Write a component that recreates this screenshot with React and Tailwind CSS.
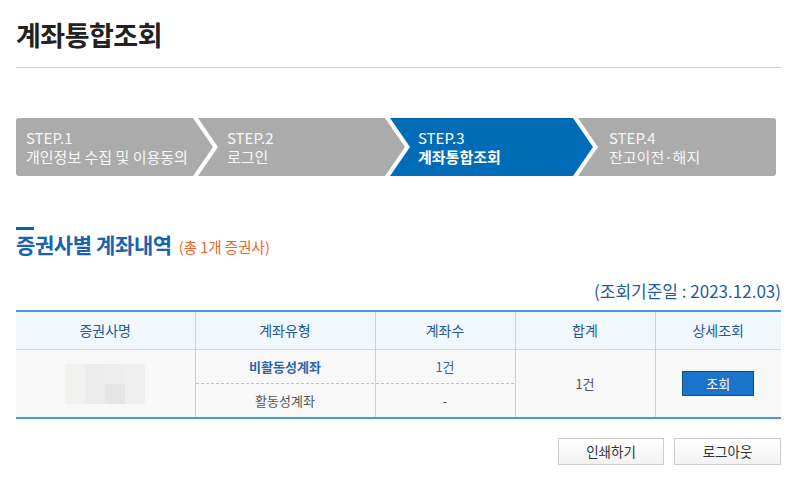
import React from 'react';

const font = { fontFamily: '"Noto Sans CJK KR", "Noto Sans", sans-serif' };

const steps = [
  { no: 'STEP.1', label: '개인정보 수집 및 이용동의', w: 'w-[197px]', pl: 'pl-[10px]', clip: '[clip-path:polygon(0_0,calc(100%_-_20px)_0,100%_50%,calc(100%_-_20px)_100%,0_100%)]' },
  { no: 'STEP.2', label: '로그인', w: 'w-[207px] ml-[-15px]', pl: 'pl-[29px]', clip: '[clip-path:polygon(0_0,calc(100%_-_20px)_0,100%_50%,calc(100%_-_20px)_100%,0_100%,20px_50%)]' },
  { no: 'STEP.3', label: '계좌통합조회', w: 'w-[203px] ml-[-15px]', pl: 'pl-[28px]', clip: '[clip-path:polygon(0_0,calc(100%_-_20px)_0,100%_50%,calc(100%_-_20px)_100%,0_100%,20px_50%)]', active: true },
  { no: 'STEP.4', label: '잔고이전·해지', w: 'w-[198px] ml-[-15px]', pl: 'pl-[31px]', clip: '[clip-path:polygon(0_0,100%_0,100%_100%,0_100%,20px_50%)]' },
];

const StepBar = () => (
  <div className="flex w-[760px] h-[58px] mt-[50px] rounded-[3px] overflow-hidden">
    {steps.map((s) => (
      <div
        key={s.no}
        className={`${s.w} ${s.pl} ${s.clip} h-full flex flex-col justify-center shrink-0 ${s.active ? 'bg-[#006cb8] text-white' : 'bg-[#ababab] text-[#f7f7f7]'}`}
      >
        <div className="text-[15px] leading-[19px]">{s.no}</div>
        <div className={`text-[15px] leading-[19px] whitespace-nowrap ${s.active ? 'font-bold' : ''}`}>{s.label}</div>
      </div>
    ))}
  </div>
);

// blurred company name placeholder
const Blur = () => (
  <div className="mx-auto grid grid-cols-4 w-[80px] h-[40px]">
    <div className="bg-[#f1f1f0]" />
    <div className="bg-[#ececec]" />
    <div className="bg-[#ededed]" />
    <div className="bg-[#efefef]" />
    <div className="bg-[#f1f1f0]" />
    <div className="bg-[#ececec]" />
    <div className="bg-[#e6e6e6]" />
    <div className="bg-[#efefef]" />
  </div>
);

// dashed divider between the two account-type rows
const dashed = 'bg-[repeating-linear-gradient(to_right,#9ccbef_0_3px,transparent_3px_5px)] bg-no-repeat bg-bottom bg-[length:100%_1px]';

export default function App() {
  return (
    <div className="w-[795px] h-[482px] bg-white px-[16px] pt-[19px]" style={font}>
      <div className="w-[765px] h-[49px] border-b border-[#cfcfcf]">
        <h1 className="text-[27px] leading-[32px] font-bold text-[#222] tracking-[-0.5px]">계좌통합조회</h1>
      </div>

      <StepBar />

      <div className="mt-[51px] w-[18px] h-[3px] bg-[#0a64b4]" />
      <div className="mt-[1px] flex items-baseline gap-[7px]">
        <h2 className="text-[21px] leading-[26px] font-bold text-[#1b63ae] tracking-[-0.4px]">증권사별 계좌내역</h2>
        <span className="text-[14.5px] text-[#f0642a]">(총 1개 증권사)</span>
      </div>

      <div className="w-[765px] mt-[22px] text-right text-[17px] leading-[22px] text-[#1d5d9e]">(조회기준일 : 2023.12.03)</div>

      <table className="mt-[8px] w-[765px] border-collapse text-[13px] table-fixed">
        <colgroup>
          <col className="w-[179px]" />
          <col className="w-[180px]" />
          <col className="w-[140px]" />
          <col className="w-[140px]" />
          <col />
        </colgroup>
        <thead>
          <tr className="h-[39px] bg-[#f0f7fd] text-[#22598f] text-[14px] border-t-2 border-t-[#4b97d0] border-b border-b-[#c1dbf0]">
            <th className="font-normal">증권사명</th>
            <th className="font-normal border-l border-l-[#b7d6ef]">계좌유형</th>
            <th className="font-normal border-l border-l-[#b7d6ef]">계좌수</th>
            <th className="font-normal border-l border-l-[#b7d6ef]">합계</th>
            <th className="font-normal border-l border-l-[#b7d6ef]">상세조회</th>
          </tr>
        </thead>
        <tbody className="bg-[#f8f8f8] border-b-2 border-b-[#4b97d0]">
          <tr className="h-[34px]">
            <td rowSpan={2}><Blur /></td>
            <td className={`text-center font-bold text-[#2f62a8] border-l border-l-[#b7d6ef] ${dashed}`}>비활동성계좌</td>
            <td className={`text-center text-[#3566a6] border-l border-l-[#b7d6ef] ${dashed}`}>1건</td>
            <td rowSpan={2} className="text-center text-[#555] border-l border-l-[#b7d6ef]">1건</td>
            <td rowSpan={2} className="text-center border-l border-l-[#b7d6ef]">
              <button className="w-[72px] h-[25px] bg-[#1b74c9] border border-[#114d8a] text-white text-[13px]">조회</button>
            </td>
          </tr>
          <tr className="h-[34px]">
            <td className="text-center text-[#555] border-l border-l-[#b7d6ef]">활동성계좌</td>
            <td className="text-center text-[#555] border-l border-l-[#b7d6ef]">-</td>
          </tr>
        </tbody>
      </table>

      <div className="w-[765px] mt-[19px] flex justify-end gap-[10px]">
        <button className="w-[106px] h-[27px] border border-[#cccccc] bg-gradient-to-b from-white to-[#f2f2f2] text-[13.5px] text-[#333]">인쇄하기</button>
        <button className="w-[107px] h-[27px] border border-[#cccccc] bg-gradient-to-b from-white to-[#f2f2f2] text-[13.5px] text-[#333]">로그아웃</button>
      </div>
    </div>
  );
}
